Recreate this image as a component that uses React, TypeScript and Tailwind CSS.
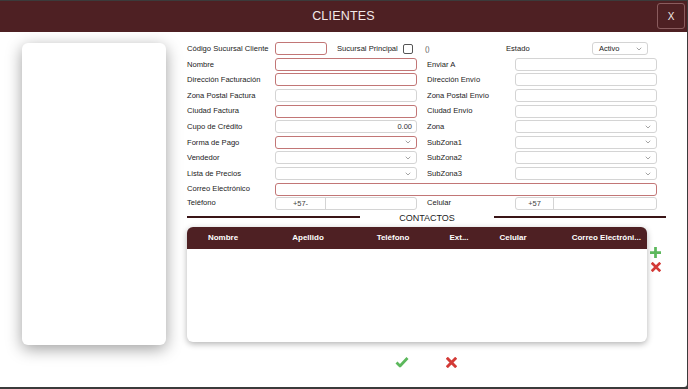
import React from 'react';
import { ChevronDown } from 'lucide-react';

const font = { fontFamily: '"Liberation Sans", Arial, sans-serif' };

// plain text box, red outline when the field is required
const Field: React.FC<{ req?: boolean; value?: string; className?: string }> = ({ req, value, className = '' }) => (
  <div
    className={`h-[13px] rounded-[3px] border bg-white flex items-center justify-end px-[4px] text-[7.5px] text-[#333] ${
      req ? 'border-[#c27676]' : 'border-[#d4d4d4]'
    } ${className}`}
  >
    {value}
  </div>
);

const Select: React.FC<{ req?: boolean; value?: string; className?: string }> = ({ req, value, className = '' }) => (
  <div
    className={`h-[13px] rounded-[3px] border bg-white flex items-center justify-between pl-[6px] pr-[4px] text-[7.5px] text-[#222] ${
      req ? 'border-[#c27676]' : 'border-[#d4d4d4]'
    } ${className}`}
  >
    <span>{value}</span>
    <ChevronDown size={8} strokeWidth={1.6} className="text-[#555]" />
  </div>
);

const Phone: React.FC<{ prefix: string; pw: string }> = ({ prefix, pw }) => (
  <div className="h-[13px] w-[142px] rounded-[3px] border border-[#d4d4d4] bg-white flex text-[7.5px] text-[#444]">
    <div className={`${pw} flex items-center justify-center border-r border-[#d4d4d4] shrink-0`}>{prefix}</div>
    <div className="flex-1" />
  </div>
);

const Label: React.FC<{ children: React.ReactNode; className?: string }> = ({ children, className = '' }) => (
  <div className={`text-[7.6px] text-[#222] whitespace-nowrap ${className}`}>{children}</div>
);

const Row: React.FC<{ children: React.ReactNode }> = ({ children }) => (
  <div className="h-[15.6px] flex items-center">{children}</div>
);

// left label + field, right label + field
const Pair: React.FC<{ l1: string; f1: React.ReactNode; l2: string; f2: React.ReactNode }> = ({ l1, f1, l2, f2 }) => (
  <Row>
    <Label className="w-[88px]">{l1}</Label>
    <div className="w-[142px]">{f1}</div>
    <Label className="w-[88px] ml-[10px]">{l2}</Label>
    <div className="w-[142px]">{f2}</div>
  </Row>
);

const PlusIcon = () => (
  <svg width="11" height="11" viewBox="0 0 12 12">
    <path d="M4.5 0h3v4.5H12v3H7.5V12h-3V7.5H0v-3h4.5z" fill="#5cb85c" />
  </svg>
);

const CrossIcon: React.FC<{ size?: number }> = ({ size = 10 }) => (
  <svg width={size} height={size} viewBox="0 0 12 12">
    <path d="M2 2l8 8M10 2l-8 8" stroke="#d33a36" strokeWidth="3.2" strokeLinecap="square" />
  </svg>
);

const CheckIcon = () => (
  <svg width="14" height="12" viewBox="0 0 14 12">
    <path d="M1.5 6.5l3.5 3.5 7.5-8" stroke="#5cb85c" strokeWidth="2.8" fill="none" strokeLinejoin="round" />
  </svg>
);

const columns = [
  { name: 'Nombre', w: 'w-[72px]' },
  { name: 'Apellido', w: 'w-[98px]' },
  { name: 'Teléfono', w: 'w-[72px]' },
  { name: 'Ext...', w: 'w-[60px]' },
  { name: 'Celular', w: 'w-[48px]' },
];

export default function App() {
  return (
    <div className="w-[688px] h-[389px] bg-[#3b3b3b] pt-[1px] overflow-hidden" style={font}>
      <div className="w-[687px] h-[386px] bg-white rounded-br-[3px] overflow-hidden flex flex-col">
        {/* Header */}
        <div className="h-[31px] bg-[#4e2023] flex items-center relative shrink-0">
          <div className="flex-1 text-center text-[12.5px] text-[#f3e9e9] tracking-[0.2px]">CLIENTES</div>
          <div className="absolute right-[2px] top-[2px] w-[28px] h-[26px] rounded-[3px] border border-[#8a5c5e] flex items-center justify-center text-[10px] text-[#f3e9e9]">
            X
          </div>
        </div>

        {/* Body */}
        <div className="flex flex-1">
          <div className="ml-[22px] mt-[11px] w-[144px] h-[302px] rounded-[6px] bg-white shadow-[0_4px_16px_rgba(0,0,0,0.38)] shrink-0" />

          <div className="ml-[21px] mt-[9px] w-[480px] flex flex-col">
            <Row>
              <Label className="w-[88px]">Código Sucursal Cliente</Label>
              <Field req className="w-[52px]" />
              <Label className="ml-[10px] w-[66px]">Sucursal Principal</Label>
              <div className="w-[10px] h-[10px] border border-[#555] rounded-[2px] bg-white" />
              <div className="ml-[12px] w-[81px] text-[7px] text-[#555]">()</div>
              <Label className="w-[86px]">Estado</Label>
              <Select value="Activo" className="w-[56px]" />
            </Row>
            <Pair l1="Nombre" f1={<Field req />} l2="Enviar A" f2={<Field />} />
            <Pair l1="Dirección Facturación" f1={<Field req />} l2="Dirección Envío" f2={<Field />} />
            <Pair l1="Zona Postal Factura" f1={<Field />} l2="Zona Postal Envío" f2={<Field />} />
            <Pair l1="Ciudad Factura" f1={<Field req />} l2="Ciudad Envío" f2={<Field />} />
            <Pair l1="Cupo de Crédito" f1={<Field value="0.00" />} l2="Zona" f2={<Select />} />
            <Pair l1="Forma de Pago" f1={<Select req />} l2="SubZona1" f2={<Select />} />
            <Pair l1="Vendedor" f1={<Select />} l2="SubZona2" f2={<Select />} />
            <Pair l1="Lista de Precios" f1={<Select />} l2="SubZona3" f2={<Select />} />
            <Row>
              <Label className="w-[88px]">Correo Electrónico</Label>
              <Field req className="w-[382px]" />
            </Row>
            <div className="h-[14px] flex items-start">
              <Label className="w-[88px]">Teléfono</Label>
              <Phone prefix="+57-" pw="w-[50px]" />
              <Label className="w-[88px] ml-[10px]">Celular</Label>
              <Phone prefix="+57" pw="w-[38px]" />
            </div>

            {/* Contactos divider */}
            <div className="flex items-center h-[10px] mt-[1px]">
              <div className="w-[173px] h-[2px] bg-[#3a1517]" />
              <div className="w-[134px] text-center text-[9px] text-[#222] mt-[4px]">CONTACTOS</div>
              <div className="w-[172px] h-[2px] bg-[#3a1517]" />
            </div>

            <div className="flex mt-[5px]">
              <div className="w-[460px] h-[115px] rounded-[6px] bg-white shadow-[0_2px_6px_rgba(0,0,0,0.3)] overflow-hidden">
                <div className="h-[22px] bg-[#4e2023] flex items-center text-[8px] font-bold text-white">
                  {columns.map((c) => (
                    <div key={c.name} className={`${c.w} text-center`}>{c.name}</div>
                  ))}
                  <div className="flex-1 text-right pr-[6px]">Correo Electróni...</div>
                </div>
              </div>
              <div className="ml-[3px] mt-[20px] flex flex-col items-center gap-[4px]">
                <PlusIcon />
                <CrossIcon />
              </div>
            </div>
          </div>
        </div>

        {/* Footer actions */}
        <div className="h-[40px] flex items-start justify-center gap-[37px] pl-[164px] shrink-0">
          <div className="mt-[9px]"><CheckIcon /></div>
          <div className="mt-[10px]"><CrossIcon size={11} /></div>
        </div>
      </div>
    </div>
  );
}
